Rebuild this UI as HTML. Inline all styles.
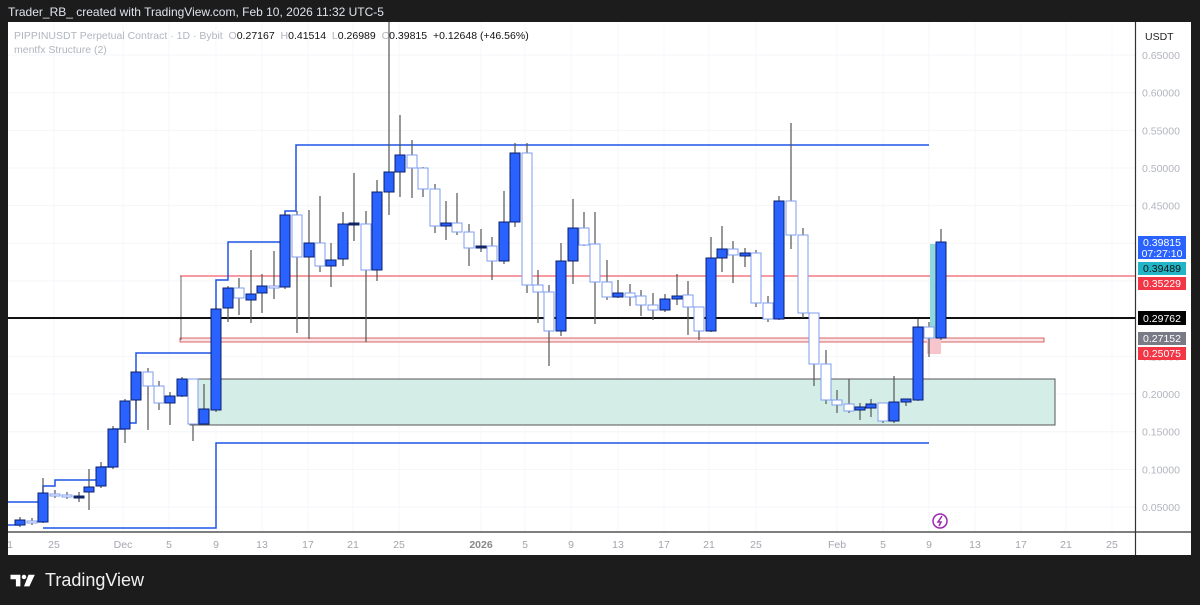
<!DOCTYPE html>
<html><head><meta charset="utf-8"><style>
html,body{margin:0;padding:0;background:#1c1c1c;width:1200px;height:605px;overflow:hidden;font-family:"Liberation Sans",sans-serif}
#hdr{position:absolute;left:8px;top:5px;color:#e0e3eb;font-size:12px}
#chart{position:absolute;left:8px;top:22px;width:1183px;height:533px;background:#fff}
svg{position:absolute;left:0;top:0}
#logo{position:absolute;left:10px;top:570px;color:#f0f0f0;font-size:18px;display:flex;align-items:center;gap:7px}
</style></head><body>
<div id="hdr">Trader_RB_ created with TradingView.com, Feb 10, 2026 11:32 UTC-5</div>
<div id="chart"></div>
<svg id="s" width="1200" height="605" xmlns="http://www.w3.org/2000/svg"></svg>
<div id="logo"><svg width="28" height="18" viewBox="0 0 30 20" style="position:static"><path d="M0 3h11v13H6V8H0z" fill="#fff"/><circle cx="15" cy="5.5" r="2.5" fill="#fff"/><path d="M20 3h7l-6 13h-6z" fill="#fff"/></svg><span>TradingView</span></div>
<script>
var s=document.getElementById('s'),h='';
function L(x1,y1,x2,y2,c,w){h+='<line x1="'+x1+'" y1="'+y1+'" x2="'+x2+'" y2="'+y2+'" stroke="'+c+'" stroke-width="'+(w||1)+'"/>';}
function R(x,y,w,hh,f,st,sw){h+='<rect x="'+x+'" y="'+y+'" width="'+w+'" height="'+hh+'" fill="'+f+'" stroke="'+(st||'none')+'" stroke-width="'+(sw||1)+'"/>';}
function T(x,y,t,c,sz,a,fw){h+='<text x="'+x+'" y="'+y+'" fill="'+c+'" font-size="'+sz+'" text-anchor="'+(a||'start')+'" font-family="Liberation Sans, sans-serif"'+(fw?' font-weight="bold"':'')+'>'+t+'</text>';}
var prices=['0.65000','0.60000','0.55000','0.50000','0.45000','0.40000','0.35000','0.30000','0.25000','0.20000','0.15000','0.10000','0.05000'];
for(var i=0;i<13;i++){var y=55+i*37.67;L(8,y,1135,y,'#f2f4f9');}
var dates=[[10,'1'],[54,'25'],[123,'Dec'],[169,'5'],[216,'9'],[262,'13'],[308,'17'],[353,'21'],[399,'25'],[481,'2026'],[525,'5'],[571,'9'],[618,'13'],[664,'17'],[709,'21'],[756,'25'],[837,'Feb'],[883,'5'],[929,'9'],[975,'13'],[1021,'17'],[1066,'21'],[1112,'25']];
dates.forEach(function(d){if(d[0]>15)L(d[0],22,d[0],532,'#f6f7fb');});
R(190,379,865,46,'#d4eee7','#555',1);
R(180,338,864,4,'#fbe3e6','#c44',0.8);
L(180,276,1135,276,'#f23645',1);
L(181,276,181,340,'#666',1);
L(8,318,1135,318,'#111',2);
var B='#1e53e5';
h+='<path d="M8,502 H43 V486 H55 V480 H101 V467 H113 V429 H125 V423 H136 V353 H216 V280 H228 V242 H285 V211 H296 V145 H929" fill="none" stroke="'+B+'" stroke-width="1.5"/>';
h+='<path d="M8,525 H20 M43,528 H216 V443 H929" fill="none" stroke="'+B+'" stroke-width="1.5"/>';
R(930,244,9,94,'#8fd9de');R(927,338,14,16,'#f7c5cc');
var c=[[20,517,527,520,525,1],[32,518,525,521,523,0],[43,478,523,493,522,1],[55,490,498,494,496,0],[67,492,499,495,497,0],[79,492,502,496,498,2],[89,469,510,487,492,1],[101,462,488,467,486,1],[113,426,469,429,467,1],[125,399,443,401,429,1],[136,370,410,372,400,1],[148,368,430,372,386,0],[159,381,410,386,403,0],[170,392,425,396,403,1],[182,377,397,379,396,1],[193,379,441,379,424,0],[204,384,425,409,424,1],[216,307,412,309,410,1],[228,286,322,288,308,1],[239,278,315,288,298,0],[251,250,323,294,300,1],[262,274,313,286,293,1],[274,251,299,286,288,0],[285,213,289,215,287,1],[297,211,333,215,257,0],[309,210,339,243,257,1],[320,196,272,243,266,0],[331,243,287,260,266,1],[343,212,266,224,259,1],[354,173,241,223,225,2],[366,211,342,224,270,0],[377,180,281,192,270,1],[389,22,215,172,192,1],[400,115,197,155,172,1],[412,140,198,155,168,0],[423,167,197,168,189,0],[435,184,233,189,226,0],[446,201,240,223,226,1],[457,193,235,223,232,0],[469,224,266,232,248,0],[481,229,252,246,248,2],[492,237,280,246,261,0],[504,191,264,222,261,1],[515,143,227,153,222,1],[527,143,293,153,285,0],[538,270,323,285,292,0],[549,285,366,292,331,0],[561,243,336,261,331,1],[573,199,284,228,261,1],[584,212,246,228,245,0],[595,212,324,244,282,0],[607,260,300,282,297,0],[618,280,298,293,297,1],[630,284,306,293,297,0],[641,290,316,296,305,0],[653,293,320,305,310,0],[665,294,312,299,310,1],[677,274,305,296,299,1],[688,281,335,295,307,0],[699,307,340,307,331,0],[711,237,332,258,331,1],[722,226,272,249,258,1],[733,241,283,249,255,0],[745,248,267,253,256,1],[756,250,307,253,303,0],[768,296,322,303,319,0],[779,196,320,201,319,1],[791,123,249,201,235,0],[803,228,318,235,313,0],[814,313,386,313,364,0],[826,350,404,364,400,0],[837,390,413,400,405,0],[849,379,413,404,411,0],[860,403,420,407,410,1],[871,399,417,404,408,1],[883,403,423,403,421,0],[894,376,423,402,421,1],[906,399,406,399,402,1],[918,319,401,327,400,1],[929,322,357,327,338,0],[941,229,340,242,338,1]];
c.forEach(function(k){var x=k[0];L(x,k[1],x,k[2],'#555',1.2);var hh=Math.max(k[4]-k[3],2);
if(k[5]==1)R(x-5,k[3],10,hh,'#2962ff','#0c1f6e',1);
else if(k[5]==2)R(x-5,k[3],10,hh,'#1a2a5a','#0c1f6e',1);
else R(x-5,k[3],10,hh,'#fff','#7e9ef0',1);});
R(1136,22,55,533,'#fff');
L(8,532,1191,532,'#333',1.2);L(1135.5,22,1135.5,555,'#333',1.2);
prices.forEach(function(p,i){T(1142,59+i*37.67,p,'#b2b5be',10.5);});
dates.forEach(function(d){T(d[0],548,d[1],d[1]=='2026'?'#888':'#a3a6af',10.5,'middle',d[1]=='2026');});
T(1145,40,'USDT','#222',10.5);
R(1138,236,48,23,'#2962ff');T(1162,246,'0.39815','#fff',10.5,'middle');T(1162,257,'07:27:10','#fff',10.5,'middle');
R(1138,262,48,13,'#22b5c8');T(1162,272,'0.39489','#111',10.5,'middle');
R(1138,277,48,13,'#f23645');T(1162,287,'0.35229','#fff',10.5,'middle');
R(1138,311,48,14,'#000');T(1162,322,'0.29762','#fff',10.5,'middle');
R(1138,332,48,13,'#787b86');T(1162,342,'0.27152','#fff',10.5,'middle');
R(1138,347,48,13,'#f23645');T(1162,357,'0.25075','#fff',10.5,'middle');
h+='<circle cx="940" cy="521" r="7" fill="#fff" stroke="#9c27b0" stroke-width="1.5"/><path d="M942 516 L938 522 H941 L939 526" fill="none" stroke="#9c27b0" stroke-width="1.5"/>';
h+='<text x="14" y="39" font-size="10.5" font-family="Liberation Sans, sans-serif" fill="#b2b5be">PIPPINUSDT Perpetual Contract · 1D · Bybit &#160;O<tspan fill="#111">0.27167</tspan> &#160;H<tspan fill="#111">0.41514</tspan> &#160;L<tspan fill="#111">0.26989</tspan> &#160;C<tspan fill="#111">0.39815 &#160;+0.12648 (+46.56%)</tspan></text>';
T(14,53,'mentfx Structure (2)','#b2b5be',10.5);
s.innerHTML=h;
</script>
</body></html>
